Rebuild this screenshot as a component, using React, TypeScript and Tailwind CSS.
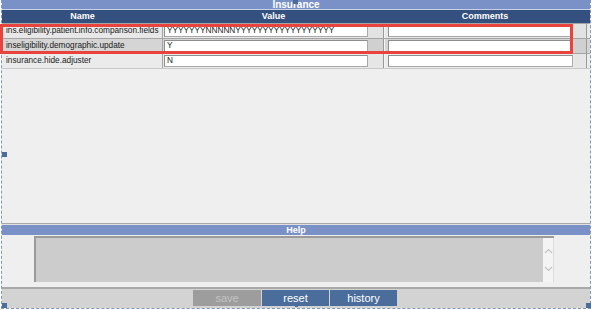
import React from "react";

const rows = [
  { name: "ins.eligibility.patient.info.comparison.fields", value: "YYYYYYYNNNNNYYYYYYYYYYYYYYYYYY", bg: "bg-[#e8e8e8]", btn: "bg-[#e2e2e2]" },
  { name: "inseligibility.demographic.update", value: "Y", bg: "bg-[#d5d5d5]", btn: "bg-[#d0d0d0]" },
  { name: "insurance.hide.adjuster", value: "N", bg: "bg-[#ebebeb]", btn: "bg-[#e6e6e6]" },
];

export default function App() {
  return (
    <div className="w-[592px] h-[310px] bg-white relative" style={{ fontFamily: '"Liberation Sans", Arial, sans-serif' }}>
      <div className="ml-[1px] w-[590px] h-[309px] border-l border-r border-b border-dashed border-[#7f98b8] flex flex-col bg-[#efefef] relative">
        {/* title */}
        <div className="h-[9px] bg-[#7a91c7] flex items-end justify-center overflow-hidden">
          <span className="text-white font-bold text-[10px] leading-[10px] -mb-[1px]">Insurance</span>
        </div>
        <div className="h-[1px] bg-[#c9d2e8]" />
        {/* header */}
        <div className="h-[13px] bg-[#34507e] flex text-white font-bold text-[9px] leading-[13px]">
          <div className="w-[161px] text-center">Name</div>
          <div className="w-[221px] text-center">Value</div>
          <div className="w-[202px] text-center">Comments</div>
        </div>
        {/* rows */}
        {rows.map((r, i) => (
          <div key={i} className={`h-[15px] flex border-t border-[#a4a4a4] ${r.bg}`}>
            <div className="w-[161px] border-r border-[#a4a4a4] pl-[4px] text-[8.25px] leading-[14px] text-[#1a1a1a] whitespace-nowrap overflow-hidden">
              {r.name}
            </div>
            <div className="w-[205px] pl-[1px] pt-[1px]">
              <div className="h-[12px] bg-white border border-[#a8a8a8] border-t-[#8e8e8e] border-l-[#8e8e8e] pl-[2px] text-[8.25px] leading-[10px] text-[#1a1a1a] whitespace-nowrap overflow-hidden">
                {r.value}
              </div>
            </div>
            <div className={`w-[16px] ${r.btn} border-r border-[#9a9a9a]`} />
            <div className="w-[189px] pl-[3px] pt-[1px] border-l border-[#f4f4f4]">
              <div className="h-[12px] bg-white border border-[#a8a8a8] border-t-[#8e8e8e] border-l-[#8e8e8e]" />
            </div>
            <div className={`w-[13px] ${r.btn} border-r border-[#9a9a9a] ml-[1px]`} />
          </div>
        ))}
        <div className="h-[1px] bg-[#c8c8c8]" />
        {/* filler */}
        <div className="flex-1 bg-[#efefef]" />
        <div className="h-[1px] bg-[#a8a8a8]" />
        <div className="h-[1px] bg-[#e0e0e0]" />
        {/* help bar */}
        <div className="h-[10px] bg-[#7a91c7] flex items-center justify-center">
          <span className="text-white font-bold text-[9px] leading-[10px]">Help</span>
        </div>
        {/* help body */}
        <div className="h-[52px] bg-[#efefef] pt-[1px] pl-[32px]">
          <div className="w-[520px] h-[46px] flex border-t-2 border-l-2 border-[#9a9a9a]">
            <div className="flex-1 bg-[#cccccc]" />
            <div className="w-[11px] bg-[#f4f4f4] border-r border-[#dcdcdc] flex flex-col items-center justify-around py-[4px]">
              <svg width="9" height="6" viewBox="0 0 9 6"><path d="M1 5 L4.5 1.5 L8 5" fill="none" stroke="#c4c4c4" strokeWidth="1.2" /></svg>
              <svg width="9" height="6" viewBox="0 0 9 6"><path d="M1 1 L4.5 4.5 L8 1" fill="none" stroke="#c4c4c4" strokeWidth="1.2" /></svg>
            </div>
          </div>
        </div>
        {/* bottom bar */}
        <div className="flex-none h-[21px] bg-[#d3d3d3] border-t-2 border-[#a8a8a8] flex items-start justify-center pt-[1px]">
          <div className="flex gap-[1px] ml-[-2px]">
            <div className="w-[68px] h-[16px] bg-[#9d9d9d] text-[#c4c4c4] text-[11px] leading-[16px] text-center">save</div>
            <div className="w-[67px] h-[16px] bg-[#4a6d9c] text-white text-[11px] leading-[16px] text-center">reset</div>
            <div className="w-[67px] h-[16px] bg-[#4a6d9c] text-white text-[11px] leading-[16px] text-center">history</div>
          </div>
        </div>
      </div>
      {/* red annotation box */}
      <div className="absolute left-0 top-[24px] w-[573px] h-[30px] border-[3px] border-[#e8433d]" />
      {/* handles */}
      <div className="absolute left-[293px] top-0 w-[5px] h-[4px] bg-[#4a6d9c]" />
      <div className="absolute left-[2px] top-[152px] w-[5px] h-[5px] bg-[#4a6d9c]" />
      <div className="absolute left-[2px] top-[303px] w-[5px] h-[5px] bg-[#4a6d9c]" />
      <div className="absolute left-[586px] top-[303px] w-[5px] h-[5px] bg-[#4a6d9c]" />
      <div className="absolute left-[295px] top-[304px] w-[3px] h-[3px] bg-[#4a6d9c]" />
    </div>
  );
}
